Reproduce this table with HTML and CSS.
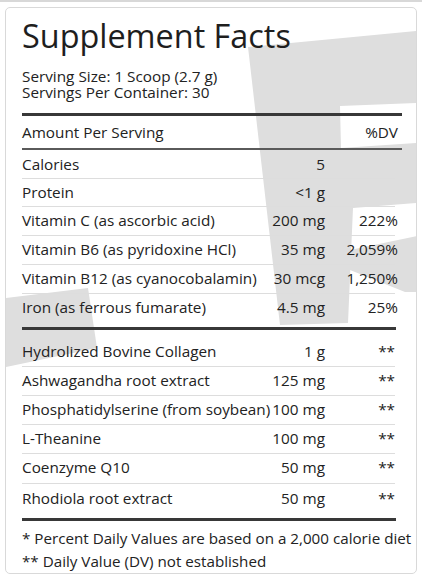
FILE: index.html
```
<!DOCTYPE html>
<html lang="en">
<head>
<meta charset="utf-8">
<title>Supplement Facts</title>
<link rel="stylesheet" href="styles.css">
</head>
<body>
<div class="card">
  <svg class="mark" width="410" height="566" viewBox="6 8 410 566" aria-hidden="true">
    <polygon points="248,47 417,31 417,103 340,106 341,148 417,143 417,203 353,208 348,323 280,325"/>
    <polygon points="350,250 417,236 417,292 405,292 350,270"/>
    <polygon points="6,298 88,288 97,348 6,367"/>
  </svg>
  <div class="content">
    <h1 class="title">Supplement Facts</h1>
    <p class="serving">Serving Size: 1 Scoop (2.7 g)<br>Servings Per Container: 30</p>
    <div class="rule-thick"></div>
    <div class="row head"><span class="name">Amount Per Serving</span><span class="amt"></span><span class="dv">%DV</span></div>
    <div class="rule-mid"></div>
    <div class="section">
      <div class="row"><span class="name">Calories</span><span class="amt">5</span><span class="dv"></span></div>
      <div class="row"><span class="name">Protein</span><span class="amt">&lt;1 g</span><span class="dv"></span></div>
      <div class="row"><span class="name">Vitamin C (as ascorbic acid)</span><span class="amt">200 mg</span><span class="dv">222%</span></div>
      <div class="row"><span class="name">Vitamin B6 (as pyridoxine HCl)</span><span class="amt">35 mg</span><span class="dv">2,059%</span></div>
      <div class="row"><span class="name">Vitamin B12 (as cyanocobalamin)</span><span class="amt">30 mcg</span><span class="dv">1,250%</span></div>
      <div class="row"><span class="name">Iron (as ferrous fumarate)</span><span class="amt">4.5 mg</span><span class="dv">25%</span></div>
    </div>
    <div class="rule-thick short"></div>
    <div class="section second">
      <div class="row"><span class="name">Hydrolized Bovine Collagen</span><span class="amt">1 g</span><span class="dv star">**</span></div>
      <div class="row"><span class="name">Ashwagandha root extract</span><span class="amt">125 mg</span><span class="dv star">**</span></div>
      <div class="row"><span class="name">Phosphatidylserine (from soybean)</span><span class="amt">100 mg</span><span class="dv star">**</span></div>
      <div class="row"><span class="name">L-Theanine</span><span class="amt">100 mg</span><span class="dv star">**</span></div>
      <div class="row"><span class="name">Coenzyme Q10</span><span class="amt">50 mg</span><span class="dv star">**</span></div>
      <div class="row"><span class="name">Rhodiola root extract</span><span class="amt">50 mg</span><span class="dv star">**</span></div>
    </div>
    <div class="rule-thick short"></div>
    <div class="notes">
      <div>* Percent Daily Values are based on a 2,000 calorie diet</div>
      <div>** Daily Value (DV) not established</div>
    </div>
  </div>
</div>
</body>
</html>
```
FILE: styles.css
```
html, body {
  background: #ffffff;
}
body {
  margin: 0;
  padding: 5px 0 0 5px;
  border-top: 2px solid #d8d8d8;
  font-family: "Open Sans", "Noto Sans", sans-serif;
  color: #222222;
}
.card {
  position: relative;
  width: 412px;
  box-sizing: border-box;
  border: 1px solid #d9d9d9;
  border-radius: 5px;
  background: #ffffff;
  padding: 9px 14px 0 16px;
  overflow: hidden;
}
.mark {
  position: absolute;
  left: 0;
  top: 0;
  fill: #dedede;
}
.content {
  position: relative;
}
.title {
  margin: 0;
  font-size: 32.4px;
  line-height: 36px;
  font-weight: 400;
  color: #1e1e1e;
  white-space: nowrap;
}
.serving {
  margin: 14.5px 0 0;
  font-size: 15.3px;
  line-height: 16px;
  white-space: nowrap;
}
.rule-thick {
  height: 3px;
  background: #383838;
  margin-top: 13.5px;
}
.rule-thick.short {
  margin-top: 0;
  width: 374px;
}
.rule-mid {
  height: 2px;
  background: #5a5a5a;
}
.row {
  display: grid;
  grid-template-columns: minmax(0, 1fr) 70px 70px;
  font-size: 15.3px;
  line-height: 20px;
  white-space: nowrap;
  padding: 3px 0 4.75px;
  border-top: 1px solid #dddddd;
}
.section {
  width: 373px;
}
.row.head {
  border-top: 0;
  padding: 6px 0;
}
.section .row:first-child {
  border-top: 0;
  padding-top: 3.7px;
  padding-bottom: 4px;
}
.section .row:last-child {
  padding-bottom: 10px;
}
.section.second .row {
  padding-bottom: 5.25px;
}
.section.second .row:first-child {
  padding-top: 11px;
  padding-bottom: 5px;
}
.section.second .row:last-child {
  padding-top: 4px;
  padding-bottom: 10px;
}
.amt {
  text-align: right;
}
.dv {
  text-align: right;
  margin-right: -3px;
}
.head .dv {
  margin-right: 4px;
}
.dv.star {
  margin-right: 0;
}
.notes {
  margin-top: 6.6px;
  font-size: 15.2px;
  line-height: 23px;
  white-space: nowrap;
}
```
